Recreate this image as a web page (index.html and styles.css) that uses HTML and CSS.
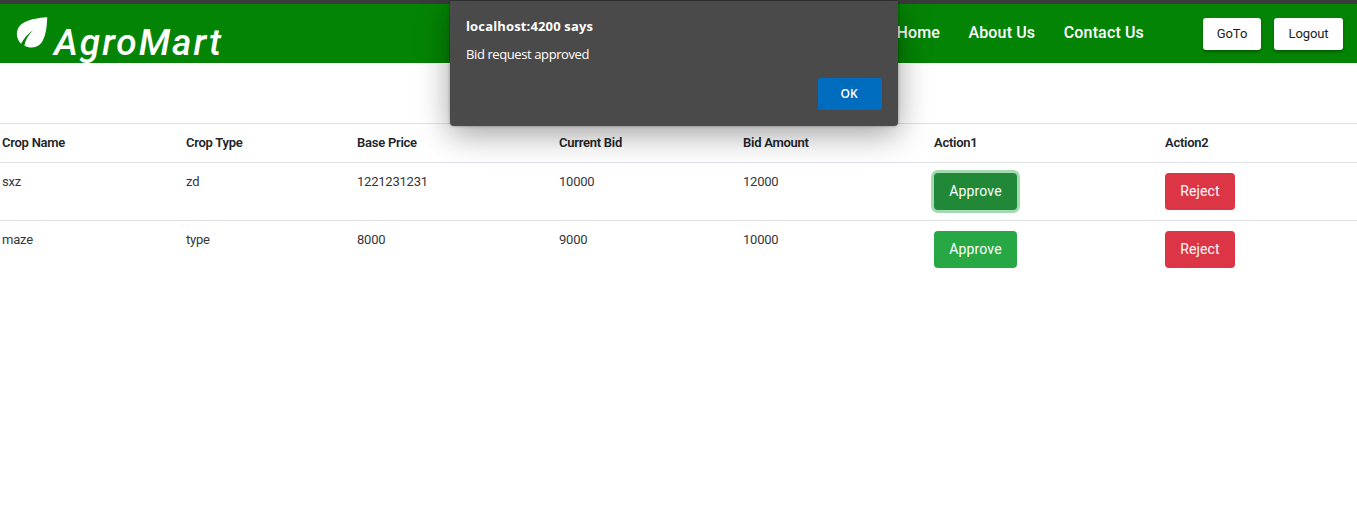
FILE: index.html
```html
<!DOCTYPE html>
<html lang="en">
<head>
<meta charset="utf-8">
<title>AgroMart</title>
<link rel="stylesheet" href="styles.css">
</head>
<body>
<header class="navbar">
  <a class="brand">
    <svg class="brand-icon" viewBox="0 0 46 46"><path d="M38.2 8.2C30 8.7 18.500 10.200 12 15.500C6.500 20.500 6.500 29 12 34.800C14.500 30 18.500 25 24 21.300C19.500 26 16.200 31 15.400 36.500C20 39.800 28 39.300 31.800 34.500C36.500 29 38 18 38.200 8.200z"/></svg>
    <span class="brand-name">AgroMart</span>
  </a>
  <nav class="links">
    <a>Home</a>
    <a>About Us</a>
    <a>Contact Us</a>
  </nav>
  <div class="nav-actions">
    <button class="nav-btn goto">GoTo</button>
    <button class="nav-btn logout">Logout</button>
  </div>
</header>
<main>
  <table class="bids">
    <colgroup><col class="c-name"><col class="c-type"><col class="c-price"><col class="c-bid"><col class="c-amount"><col class="c-approve"><col></colgroup>
    <thead>
      <tr><th>Crop Name</th><th>Crop Type</th><th>Base Price</th><th>Current Bid</th><th>Bid Amount</th><th>Action1</th><th>Action2</th></tr>
    </thead>
    <tbody>
      <tr><td>sxz</td><td>zd</td><td>1221231231</td><td>10000</td><td>12000</td><td><button class="btn approve active">Approve</button></td><td><button class="btn reject">Reject</button></td></tr>
      <tr><td>maze</td><td>type</td><td>8000</td><td>9000</td><td>10000</td><td><button class="btn approve">Approve</button></td><td><button class="btn reject">Reject</button></td></tr>
    </tbody>
  </table>
</main>
<div class="dialog" role="dialog">
  <strong class="dialog-title">localhost:4200 says</strong>
  <p class="dialog-text">Bid request approved</p>
  <button class="dialog-ok">OK</button>
</div>
</body>
</html>
```
FILE: styles.css
```css
* { box-sizing: border-box; }
body {
  margin: 0;
  background: #fff;
  color: #212529;
  font-family: Roboto, "Liberation Sans", sans-serif;
  font-size: 13px;
  overflow: hidden;
}
button { border: 0; font-family: inherit; padding: 0; }
.navbar {
  display: flex;
  align-items: flex-start;
  height: 63px;
  border-top: 4px solid #3b3b3b;
  background: #048404;
  color: #fff;
  padding: 0 14px 0 9px;
}
.brand { display: flex; }
.brand-icon { width: 46px; height: 46px; margin-top: 5px; fill: #fff; }
.brand-name {
  margin: 18px 0 0 -1px;
  font-size: 37px;
  line-height: 42px;
  font-weight: 500;
  font-style: italic;
  letter-spacing: 2px;
}
.links {
  display: flex;
  gap: 28.5px;
  margin-left: auto;
  padding-top: 19px;
  font-size: 16px;
  line-height: 20px;
  font-weight: 500;
  letter-spacing: .15px;
}
.nav-actions { display: flex; gap: 13px; margin: 14px 0 0 59px; }
.nav-btn {
  height: 32px;
  padding-bottom: 2px;
  border-radius: 3px;
  background: #fff;
  color: #212121;
  font-size: 13px;
  letter-spacing: -.1px;
  box-shadow: 0 2px 3px rgba(0, 0, 0, .3);
}
.goto { width: 58px; }
.logout { width: 69px; }
main { padding-top: 60px; }
.bids { width: 100%; table-layout: fixed; border-collapse: separate; border-spacing: 0; }
.c-name { width: 184px; }
.c-type { width: 171px; }
.c-price { width: 202px; }
.c-bid { width: 184px; }
.c-amount { width: 191px; }
.c-approve { width: 231px; }
th, td { border-top: 1px solid #dee2e6; padding: 0 2px; text-align: left; vertical-align: top; }
th { height: 39px; padding-top: 10px; line-height: 18px; font-weight: 600; letter-spacing: -.25px; }
td { height: 58px; padding-top: 10px; line-height: 18px; letter-spacing: -.22px; color: #33373b; }
.btn {
  display: block;
  height: 37px;
  padding-bottom: 2px;
  border-radius: 4px;
  color: #fff;
  font-size: 14px;
  letter-spacing: .15px;
}
.approve { width: 83px; background: #28a745; }
.approve.active { background: #218838; box-shadow: 0 0 0 3px #a4d9b1; }
.reject { width: 70px; background: #dc3545; }
.dialog {
  position: absolute;
  top: 1px;
  left: 450px;
  width: 448px;
  height: 125px;
  display: flex;
  flex-direction: column;
  padding: 15px 16px 16px;
  border-radius: 0 0 4px 4px;
  background: #4a4a4a;
  color: #fff;
  font-family: "Open Sans", "Noto Sans", sans-serif;
  box-shadow: 0 8px 32px rgba(0, 0, 0, .38), 0 0 3px rgba(0, 0, 0, .35);
}
.dialog-title { font-size: 13px; line-height: 20px; font-weight: 700; letter-spacing: .15px; }
.dialog-text { margin: 8px 0 0; font-size: 13px; line-height: 20px; letter-spacing: -.4px; }
.dialog-ok {
  align-self: flex-end;
  width: 64px;
  height: 32px;
  padding: 0 2px 2px 0;
  margin-top: 14px;
  border-radius: 2px;
  background: #006cbe;
  color: #fff;
  font-size: 12px;
  font-weight: 600;
}
```
